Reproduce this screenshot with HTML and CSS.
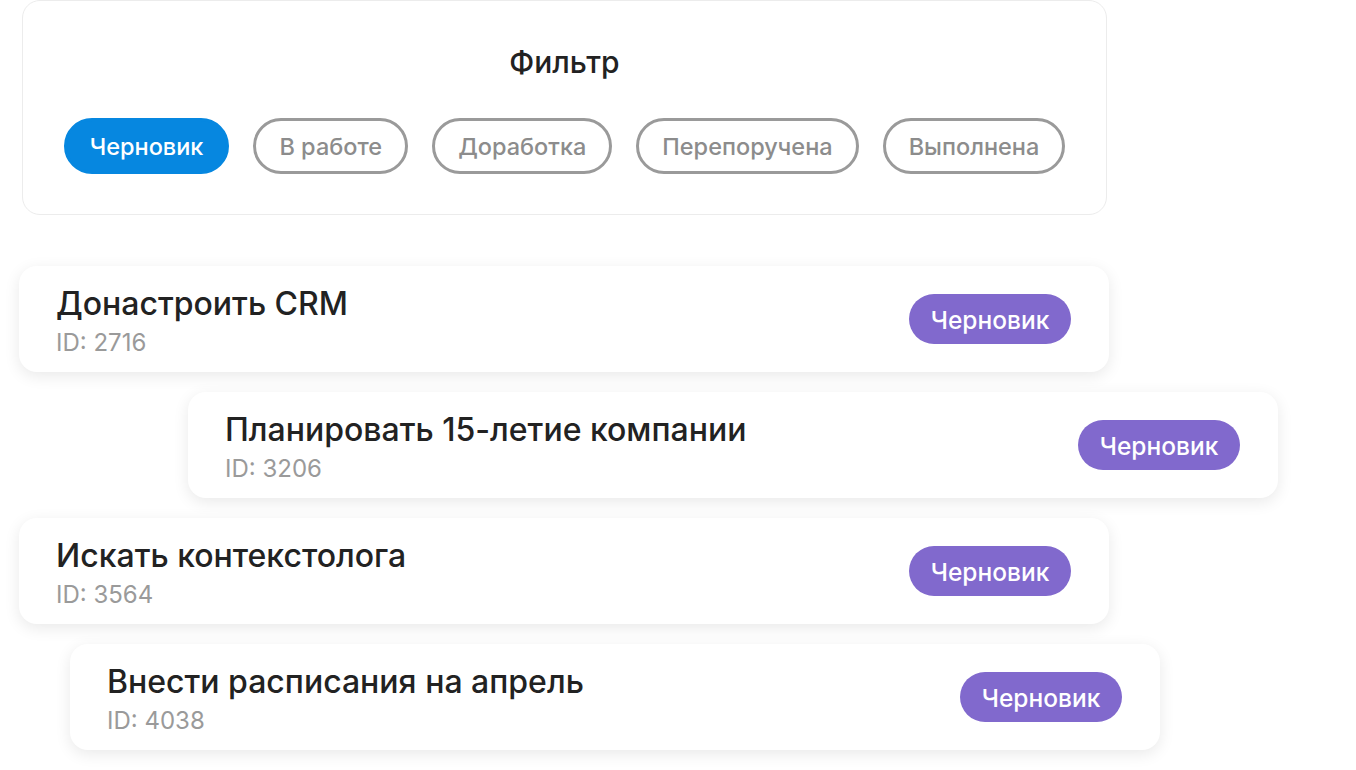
FILE: index.html
```html
<!DOCTYPE html>
<html lang="ru">
<head>
<meta charset="utf-8">
<title>Фильтр задач</title>
<link rel="stylesheet" href="styles.css">
</head>
<body>
<div class="page">
  <section class="filter">
    <h2 class="filter-title">Фильтр</h2>
    <div class="chips">
      <span class="chip chip-active">Черновик</span>
      <span class="chip">В работе</span>
      <span class="chip">Доработка</span>
      <span class="chip">Перепоручена</span>
      <span class="chip">Выполнена</span>
    </div>
  </section>

  <div class="tasks">
    <div class="task task-a">
      <div class="task-text">
        <div class="task-name">Донастроить CRM</div>
        <div class="task-id">ID: 2716</div>
      </div>
      <span class="badge">Черновик</span>
    </div>
    <div class="task task-b">
      <div class="task-text">
        <div class="task-name">Планировать 15-летие компании</div>
        <div class="task-id">ID: 3206</div>
      </div>
      <span class="badge">Черновик</span>
    </div>
    <div class="task task-a">
      <div class="task-text">
        <div class="task-name">Искать контекстолога</div>
        <div class="task-id">ID: 3564</div>
      </div>
      <span class="badge">Черновик</span>
    </div>
    <div class="task task-c">
      <div class="task-text">
        <div class="task-name">Внести расписания на апрель</div>
        <div class="task-id">ID: 4038</div>
      </div>
      <span class="badge">Черновик</span>
    </div>
  </div>
</div>
</body>
</html>
```

FILE: styles.css
```css
* { box-sizing: border-box; }
html, body {
  margin: 0;
  padding: 0;
  background: #ffffff;
}
body {
  font-family: Inter, "Noto Sans", sans-serif;
  color: #222;
}
.page {
  width: 1356px;
  height: 770px;
  overflow: hidden;
}
.filter {
  margin: 0 0 0 22px;
  width: 1085px;
  height: 215px;
  border: 1px solid #ececec;
  border-radius: 18px;
  background: #fff;
  padding: 44px 0 0;
}
.filter-title {
  margin: 0;
  text-align: center;
  font-size: 30px;
  line-height: 34px;
  font-weight: 500;
  color: #222;
}
.chips {
  display: flex;
  justify-content: center;
  gap: 24px;
  margin-top: 39px;
}
.chip {
  height: 56px;
  border: 3px solid #9a9a9a;
  border-radius: 28px;
  padding: 0 23px;
  display: flex;
  align-items: center;
  font-size: 23.5px;
  color: #8c8c8c;
  font-weight: 500;
}
.chip-active {
  background: #0687e0;
  border-color: #0687e0;
  color: #fff;
}
.tasks {
  display: flex;
  flex-direction: column;
  gap: 20px;
  margin-top: 51px;
}
.task {
  width: 1090px;
  height: 106px;
  background: #fff;
  border-radius: 18px;
  box-shadow: 0 4px 16px rgba(0,0,0,0.09);
  display: flex;
  align-items: center;
  justify-content: space-between;
  padding: 0 38px 0 37px;
}
.task-a { margin-left: 19px; }
.task-b { margin-left: 188px; }
.task-c { margin-left: 70px; }
.task-text {
  padding-top: 5px;
}
.task-name {
  font-size: 32px;
  line-height: 36px;
  font-weight: 500;
  color: #222;
}
.task-id {
  font-size: 24px;
  line-height: 28px;
  color: #9a9a9a;
  margin-top: 7px;
}
.badge {
  width: 162px;
  height: 50px;
  border-radius: 25px;
  background: #8169cd;
  color: #fff;
  font-size: 24.5px;
  font-weight: 500;
  display: flex;
  align-items: center;
  justify-content: center;
  padding-top: 2px;
}
```
